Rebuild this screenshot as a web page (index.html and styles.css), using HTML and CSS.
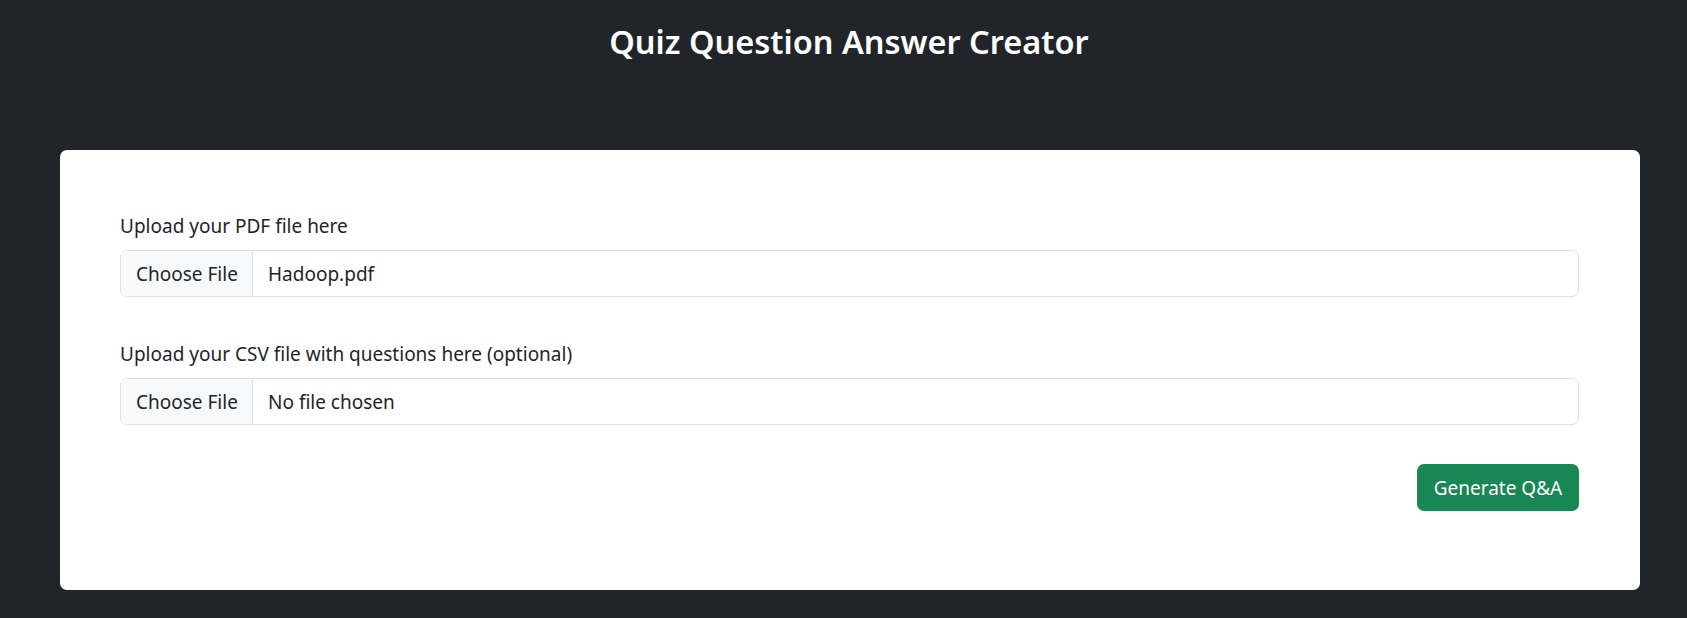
FILE: index.html
```html
<!DOCTYPE html>
<html lang="en">
<head>
<meta charset="utf-8">
<title>Quiz Question Answer Creator</title>
<link rel="stylesheet" href="styles.css">
</head>
<body>
<header class="page-header">
  <h1 class="title">Quiz Question Answer Creator</h1>
</header>
<main class="card">
  <form class="upload-form">
    <div class="field">
      <label class="field-label">Upload your PDF file here</label>
      <div class="file-input">
        <span class="file-btn">Choose File</span>
        <span class="file-name">Hadoop.pdf</span>
      </div>
    </div>
    <div class="field">
      <label class="field-label">Upload your CSV file with questions here (optional)</label>
      <div class="file-input">
        <span class="file-btn">Choose File</span>
        <span class="file-name">No file chosen</span>
      </div>
    </div>
    <div class="actions">
      <button type="button" class="btn-generate">Generate Q&amp;A</button>
    </div>
  </form>
</main>
</body>
</html>
```

FILE: styles.css
```css
* { box-sizing: border-box; }
html, body { margin: 0; padding: 0; }
body {
  background: #212529;
  font-family: "Noto Sans", "Open Sans", sans-serif;
  color: #212529;
  width: 1687px;
  height: 618px;
  overflow: hidden;
}
.page-header {
  height: 150px;
  padding: 20px 0 0 11px;
  text-align: center;
}
.title {
  margin: 0;
  color: #ffffff;
  font-size: 32.5px;
  font-weight: 600;
  line-height: 44px;
}
.card {
  margin-left: 60px;
  width: 1580px;
  height: 440px;
  background: #ffffff;
  border-radius: 7px;
  padding: 61px 61px 0 60px;
}
.upload-form {
  display: flex;
  flex-direction: column;
}
.field {
  display: flex;
  flex-direction: column;
  margin-bottom: 39px;
}
.field + .field {
  margin-top: 3px;
}
.field-label {
  font-size: 19px;
  line-height: 30px;
  margin-bottom: 9px;
}
.file-input {
  display: flex;
  height: 47px;
  border: 1px solid #dee2e6;
  border-radius: 7px;
  overflow: hidden;
  font-size: 19px;
  align-items: stretch;
}
.file-btn {
  display: flex;
  align-items: center;
  width: 132px;
  padding-left: 15px;
  background: #f8f9fa;
  border-right: 1px solid #dee2e6;
}
.file-name {
  display: flex;
  align-items: center;
  padding-left: 15px;
}
.actions {
  display: flex;
  justify-content: flex-end;
}
.btn-generate {
  height: 47px;
  width: 162px;
  padding: 0;
  border: none;
  border-radius: 7px;
  background: #198754;
  color: #ffffff;
  font-family: inherit;
  font-size: 19px;
}
```
